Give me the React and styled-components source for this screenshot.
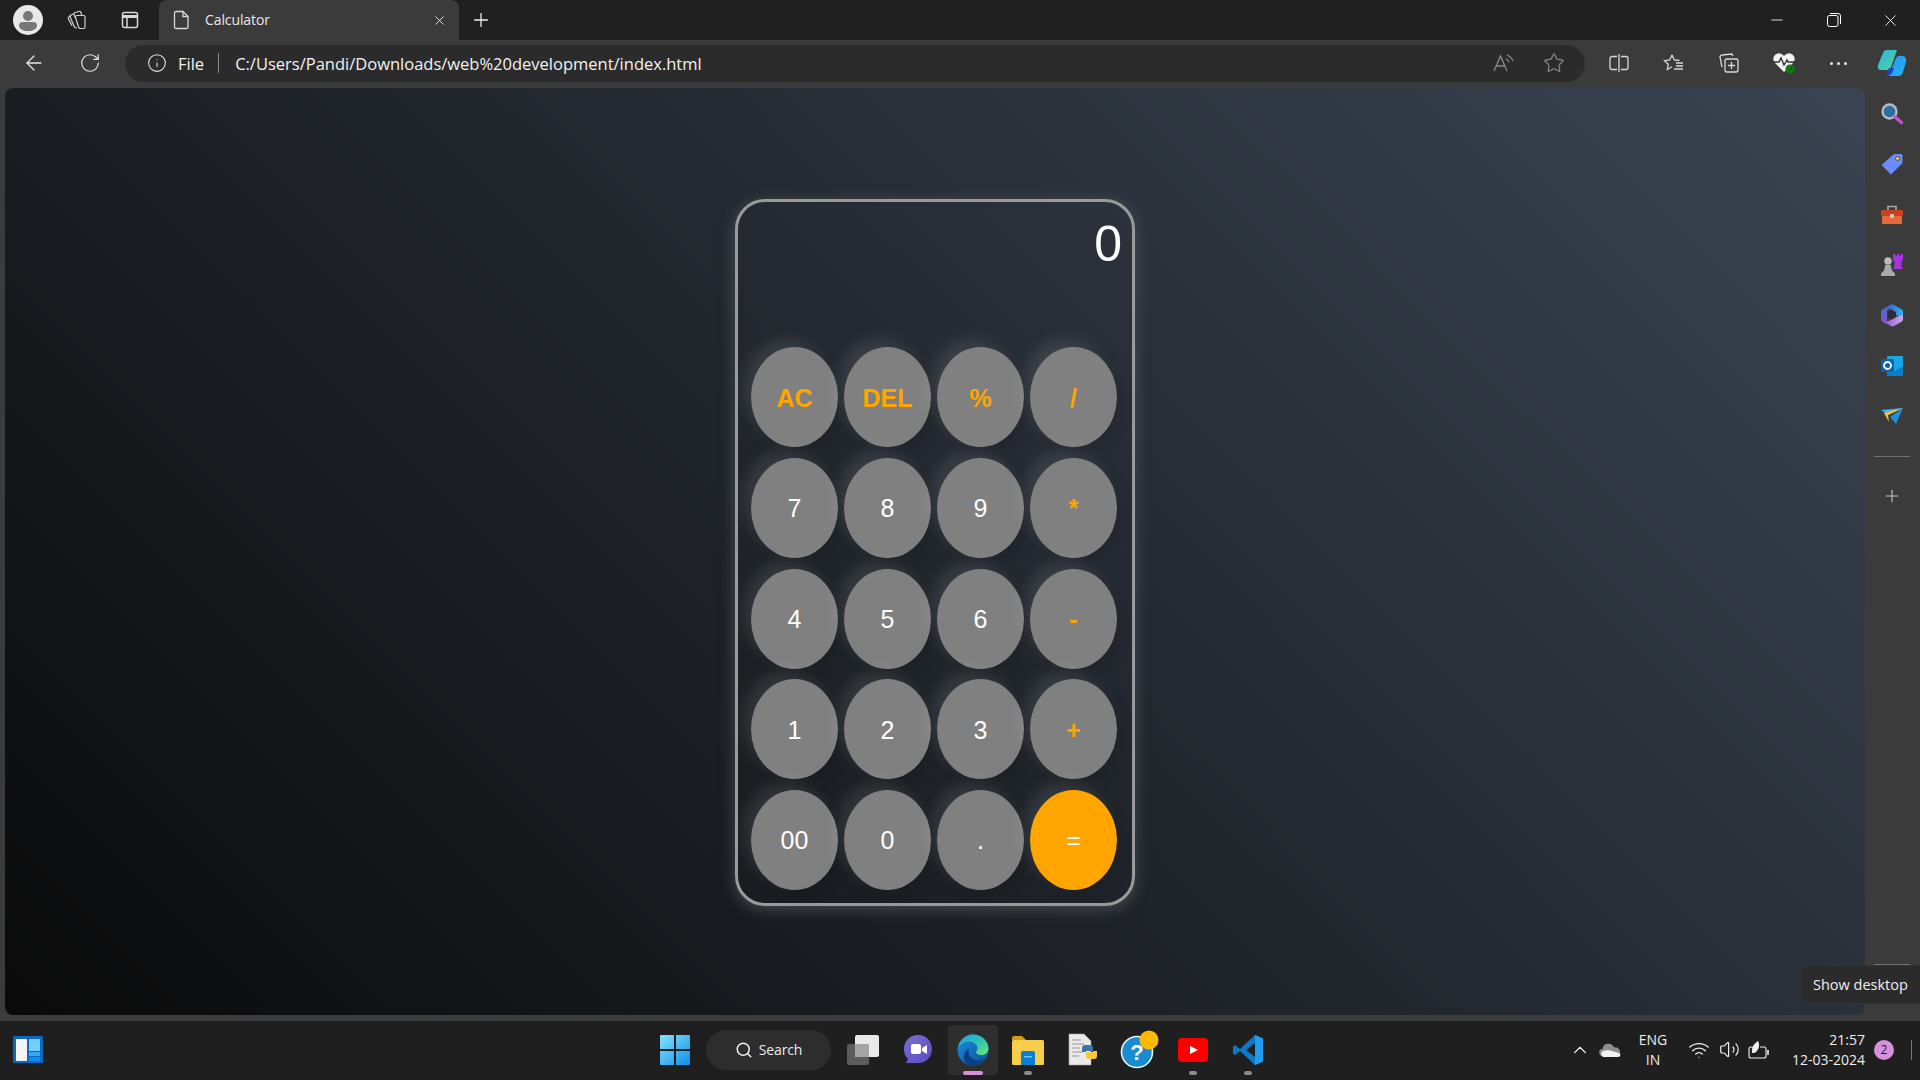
import React from 'react'
import styled, { createGlobalStyle } from 'styled-components'
import { ArrowLeft, RotateCw, Info, Star, Plus, X, Minus, Search, ChevronUp, Wifi, Volume2 } from 'lucide-react'

const keys = [
  { label: 'AC', op: true }, { label: 'DEL', op: true }, { label: '%', op: true }, { label: '/', op: true },
  { label: '7' }, { label: '8' }, { label: '9' }, { label: '*', op: true },
  { label: '4' }, { label: '5' }, { label: '6' }, { label: '-', op: true },
  { label: '1' }, { label: '2' }, { label: '3' }, { label: '+', op: true },
  { label: '00' }, { label: '0' }, { label: '.' }, { label: '=', equal: true },
]

const Avatar = () => (
  <svg width="30" height="30" viewBox="0 0 30 30">
    <circle cx="15" cy="15" r="15" fill="#e8e8e8" />
    <circle cx="15" cy="11" r="5" fill="#777" />
    <path d="M6 20c0-2 2-3 4-3h10c2 0 4 1 4 3 0 4-4 6-9 6s-9-2-9-6z" fill="#777" />
  </svg>
)
const CollectionsTabs = () => (
  <svg width="22" height="22" viewBox="0 0 22 22" fill="none" stroke="#cfcfcf" strokeWidth="1.2">
    <path d="M11 6.500h6.500a1.500 1.500 0 0 1 1.500 1.500v10a1.500 1.500 0 0 1-1.500 1.500h-3a2 2 0 0 1-2-1.500L9.500 8.500a1.500 1.500 0 0 1 1.500-2z" />
    <path d="M9.500 9L8 5.500a1.500 1.500 0 0 1 1-2L13 2.500a1.500 1.500 0 0 1 2 1l.8 3" />
    <path d="M8.500 4.500L5 6a1.500 1.500 0 0 0-.8 2l4 9.500a2 2 0 0 0 2.500 1.200" />
    <path d="M5 6.300L2.800 8a1.500 1.500 0 0 0-.4 1.800l3.600 7" />
  </svg>
)
const VerticalTabs = () => (
  <svg width="20" height="20" viewBox="0 0 20 20" fill="none" stroke="#d8d8d8" strokeWidth="1.5">
    <rect x="2.500" y="2.500" width="15" height="15" rx="2" />
    <path d="M2.500 6.500h15" strokeWidth="3" />
    <path d="M7 7v10.500" />
  </svg>
)
const PageIcon = () => (
  <svg width="18" height="20" viewBox="0 0 18 20" fill="none" stroke="#d8d8d8" strokeWidth="1.3">
    <path d="M3 1.500h7l5 5V17a1.500 1.500 0 0 1-1.500 1.500h-10.500A1.500 1.500 0 0 1 1.500 17V3A1.500 1.500 0 0 1 3 1.500z" />
    <path d="M10 1.500V6.500h5" />
  </svg>
)
const RestoreIcon = () => (
  <svg width="14" height="14" viewBox="0 0 14 14" fill="none" stroke="#fff" strokeWidth="1">
    <rect x="0.500" y="2.500" width="10.500" height="11" rx="2" />
    <path d="M3 .500h8a2.500 2.500 0 0 1 2.500 2.500v8" />
  </svg>
)
const ReadAloud = () => (
  <svg width="22" height="20" viewBox="0 0 22 20" fill="none" stroke="#8a8a8a" strokeWidth="1.3">
    <path d="M1 18L7.500 3 14 18M3.500 13h8" />
    <path d="M13 6a6 6 0 0 1 3 3M14 2a10 10 0 0 1 6 6" />
  </svg>
)
const SplitIcon = () => (
  <svg width="20" height="20" viewBox="0 0 20 20" fill="none" stroke="#d8d8d8" strokeWidth="1.3">
    <path d="M8 3.500H3a2 2 0 0 0-2 2v9a2 2 0 0 0 2 2h5M12 3.500h5a2 2 0 0 1 2 2v9a2 2 0 0 1-2 2h-5M10 1v18" />
  </svg>
)
const FavList = () => (
  <svg width="22" height="20" viewBox="0 0 22 20" fill="none" stroke="#d8d8d8" strokeWidth="1.3">
    <path d="M9 2l2.300 5 5.200.5M9 2L6.700 7 1.500 7.700l3.800 3.500-1 5.300 4.700-2.700" />
    <path d="M13 10h7M13 13h7M11 16h9" />
  </svg>
)
const CollectionAdd = () => (
  <svg width="22" height="22" viewBox="0 0 22 22" fill="none" stroke="#d8d8d8" strokeWidth="1.3">
    <path d="M15 4l-1-2-10 1a2 2 0 0 0-2 2l2 10" />
    <rect x="7" y="7" width="13" height="13" rx="2" />
    <path d="M13.500 10v7M10 13.500h7" />
  </svg>
)
const HealthHeart = () => (
  <svg width="24" height="24" viewBox="0 0 24 24">
    <path d="M12 21L3 12a5.500 5.500 0 0 1 0-8 5.500 5.500 0 0 1 8 0l1 1 1-1a5.500 5.500 0 0 1 8 0 5.500 5.500 0 0 1 0 8z" fill="#f2f2f2" />
    <path d="M1 11h6l2-4 3 7 3-5 1 2h7" fill="none" stroke="#333" strokeWidth="1.400" />
    <circle cx="18" cy="18" r="4.500" fill="#107c10" />
    <path d="M16 18l1.500 1.500 2.500-3" fill="none" stroke="#1d1d1d" strokeWidth="1" />
  </svg>
)
const Copilot = () => (
  <svg width="30" height="28" viewBox="0 0 30 28">
    <defs>
      <linearGradient id="cpa" x1="0" y1="0" x2="1" y2="1"><stop offset="0" stopColor="#1fb5e8" /><stop offset="1" stopColor="#5fd38f" /></linearGradient>
      <linearGradient id="cpb" x1="0" y1="0" x2="1" y2="1"><stop offset="0" stopColor="#2f8ff0" /><stop offset="1" stopColor="#20b8ef" /></linearGradient>
    </defs>
    <path d="M9 1h11l-6 17c-1 2-2 3-4 3H4c-2 0-4-2-3-5L6 4c.5-2 2-3 3-3z" fill="url(#cpa)" />
    <path d="M21 7h5c2 0 4 3 3 6l-3 10c-1 3-3 4-5 4H9l4-4 6-14z" fill="url(#cpb)" />
    <path d="M12 19h5l-2 5-3 3H9z" fill="#1d44c8" />
  </svg>
)
const Magnifier = () => (
  <svg width="24" height="24" viewBox="0 0 24 24">
    <circle cx="9.500" cy="9.500" r="7" fill="#2c6fa3" stroke="#b9b9b9" strokeWidth="2.400" />
    <path d="M15 15l6.500 5.500" stroke="#c94fd6" strokeWidth="3.400" strokeLinecap="round" />
  </svg>
)
const PriceTag = () => (
  <svg width="24" height="24" viewBox="0 0 24 24">
    <path d="M14 2h7a1.500 1.500 0 0 1 1.500 1.500V11L11 22.500 1.500 13z" fill="#6b8cff" />
    <circle cx="17.500" cy="6.500" r="2" fill="#f4d21f" stroke="#333" strokeWidth=".7" />
  </svg>
)
const Toolbox = () => (
  <svg width="24" height="22" viewBox="0 0 24 22">
    <path d="M8 6V2.500h8V6" fill="none" stroke="#a8a8a8" strokeWidth="1.600" />
    <rect x="1" y="6" width="22" height="6" rx="1" fill="#c8421d" />
    <rect x="2" y="12" width="20" height="8" rx="1" fill="#e7683a" />
    <rect x="10" y="10" width="4" height="4" rx="1" fill="#c9c9c9" />
  </svg>
)
const ChessPieces = () => (
  <svg width="24" height="24" viewBox="0 0 24 24">
    <path d="M13 1h2.500v2H17V1h2v2h1.500V1H23v6l-1.500 1.500V14l1.500 2H13l1.500-2V8.500L13 7z" fill="#a733e0" />
    <circle cx="8" cy="8" r="3.700" fill="#bcbcbc" />
    <path d="M5 12h6v1.500l1 4 3 3V23H1v-2.500l3-3 1-4z" fill="#a8a8a8" />
  </svg>
)
const M365 = () => (
  <svg width="22" height="24" viewBox="0 0 22 24">
    <defs>
      <linearGradient id="msa" x1="0" y1="0" x2="0" y2="1"><stop offset="0" stopColor="#3a6fd8" /><stop offset="1" stopColor="#8a52cf" /></linearGradient>
      <linearGradient id="msb" x1="0" y1="0" x2="1" y2="0"><stop offset="0" stopColor="#2f68d6" /><stop offset="1" stopColor="#37b6e9" /></linearGradient>
      <linearGradient id="msc" x1="0" y1="0" x2="1" y2="0"><stop offset="0" stopColor="#8f5bd6" /><stop offset="1" stopColor="#d3a6ee" /></linearGradient>
    </defs>
    <path d="M9 2L2 6a3 3 0 0 0-2 3v7a3 3 0 0 0 2 3l4 2V9a3 3 0 0 1 2-3l5-3z" fill="url(#msa)" />
    <path d="M9 2a3 3 0 0 1 3-.5l8 4.500a3 3 0 0 1 2 3v7l-7-4V9L9 6z" fill="url(#msb)" />
    <path d="M22 12v4a3 3 0 0 1-2 3l-7 4a3 3 0 0 1-3 0l-6-3.500 8-3.500 3-2z" fill="url(#msc)" />
    <path d="M7 9.500l4-2.300 4 2.300v4.500l-4 2.300-4-2z" fill="#2d2d33" />
  </svg>
)
const Outlook = () => (
  <svg width="22" height="22" viewBox="0 0 22 22">
    <rect x="6" y="1" width="16" height="20" rx="1" fill="#1aa5e3" />
    <path d="M6 12l8 4 8-5v10H6z" fill="#0d7fc4" />
    <rect x="0" y="4" width="13" height="13" rx="1.500" fill="#0a63b8" />
    <circle cx="6.500" cy="10.500" r="3.500" fill="none" stroke="#fff" strokeWidth="1.800" />
  </svg>
)
const PaperPlane = () => (
  <svg width="24" height="18" viewBox="0 0 24 18">
    <path d="M1 3l22-2L8 8z" fill="#3fb2ef" />
    <path d="M23 1l-7 16-6-7z" fill="#1c8fe0" />
    <path d="M23 1L8 8l1 7-5-9z" fill="#f4c23a" />
  </svg>
)
const WidgetsIcon = () => (
  <svg width="30" height="27" viewBox="0 0 30 27">
    <rect width="30" height="27" rx="1.500" fill="#0f67c0" />
    <rect x="3" y="3" width="11" height="22" rx="1" fill="#f4f4f4" />
    <rect x="16" y="3" width="11" height="12" fill="#6fd0ff" />
    <rect x="16" y="16" width="11" height="4" fill="#35a9f7" />
    <rect x="16" y="21" width="11" height="4" fill="#0a90f0" />
  </svg>
)
const WindowsLogo = () => (
  <svg width="30" height="30" viewBox="0 0 30 30">
    <defs>
      <linearGradient id="wina" x1="0" y1="0" x2="1" y2="1"><stop offset="0" stopColor="#86e3ff" /><stop offset="1" stopColor="#0f8fe8" /></linearGradient>
    </defs>
    <path d="M0 1a1 1 0 0 1 1-1h13v14H0zM16 0h13a1 1 0 0 1 1 1v13H16zM0 16h14v14H1a1 1 0 0 1-1-1zM16 16h14v13a1 1 0 0 1-1 1H16z" fill="url(#wina)" />
  </svg>
)
const TaskView = () => (
  <svg width="32" height="30" viewBox="0 0 32 30">
    <rect x="0" y="9" width="22" height="21" rx="2" fill="#5c5c5c" />
    <rect x="8" y="0" width="24" height="22" rx="2" fill="#e9e9e9" />
    <rect x="8" y="9" width="14" height="13" fill="#a5a5a5" />
  </svg>
)
const MeetChat = () => (
  <svg width="30" height="32" viewBox="0 0 30 32">
    <defs>
      <linearGradient id="mca" x1="0" y1="0" x2="1" y2="1"><stop offset="0" stopColor="#7b6fd0" /><stop offset="1" stopColor="#5a4cc0" /></linearGradient>
    </defs>
    <path d="M15 1c8 0 14 6 14 14s-6 14-14 14H3l2-4c-3-3-4-6-4-10C1 7 7 1 15 1z" fill="url(#mca)" />
    <rect x="8" y="10" width="10" height="10" rx="2" fill="#fff" />
    <path d="M19 14l5-3v9l-5-3z" fill="#fff" />
  </svg>
)
const EdgeIcon = () => (
  <svg width="32" height="34" viewBox="0 0 32 34">
    <defs>
      <linearGradient id="eda" x1="0" y1="0" x2="1" y2="1"><stop offset="0" stopColor="#1f9fe0" /><stop offset=".55" stopColor="#30c5b0" /><stop offset="1" stopColor="#6ee86a" /></linearGradient>
      <linearGradient id="edb" x1="0" y1="0" x2="1" y2="1"><stop offset="0" stopColor="#1a8fdc" /><stop offset="1" stopColor="#0d4f9a" /></linearGradient>
    </defs>
    <circle cx="16" cy="17" r="15.500" fill="url(#edb)" />
    <path d="M1 16C2 8 8 1.500 16 1.500c9 0 15.500 7 15.500 14 0 4-3 6.500-7 6.500-3 0-5.500-1-5.500-3 0-.7 1.500-1.500 1.500-3.500 0-4-4-7-8.500-7C7 8.500 2 12 1 16z" fill="url(#eda)" />
    <path d="M12 15c-2 5 1 11 7 12 4 .7 7-.5 9-1.500-3 4.500-7 7-12 7-3 0-5-1-7-2.500-3-3-3.500-10 3-15z" fill="#0b3f86" />
  </svg>
)
const FolderIcon = () => (
  <svg width="32" height="30" viewBox="0 0 32 30">
    <path d="M0 3a2 2 0 0 1 2-2h8l4 4H0z" fill="#d99a0e" />
    <rect x="0" y="5" width="32" height="25" rx="1.500" fill="#f8ce4a" />
    <path d="M9 18a2 2 0 0 1 2-2h10a2 2 0 0 1 2 2v12H9z" fill="#0a7fd4" />
    <rect x="12" y="21" width="8" height="1.500" fill="#6ec3f5" />
  </svg>
)
const PythonFile = () => (
  <svg width="30" height="34" viewBox="0 0 30 34">
    <path d="M1 1h15l7 7v24H1z" fill="#e9e9e9" stroke="#aaa" strokeWidth=".6" />
    <path d="M4 7h9M4 11h12M4 15h8M4 19h10M4 23h7" stroke="#999" strokeWidth="1.200" />
    <path d="M17 12h5a3 3 0 0 1 3 3v3h-7v1h-4v-4a3 3 0 0 1 3-3z" fill="#3a74a8" />
    <path d="M29 18v5a3 3 0 0 1-3 3h-5a3 3 0 0 1-3-3v-4h7v-1z" fill="#f7c93e" />
  </svg>
)
const HelpIcon = () => (
  <svg width="42" height="40" viewBox="-4 0 42 40">
    <circle cx="16" cy="22" r="15.500" fill="#1b8bd0" stroke="#e8f4fb" strokeWidth="1.600" />
    <circle cx="16" cy="22" r="12" fill="#1b8bd0" />
    <text x="16" y="30" textAnchor="middle" fontSize="22" fontWeight="700" fontFamily="Liberation Sans, sans-serif" fill="#fff">?</text>
    <circle cx="28" cy="10" r="9.500" fill="#ffb900" />
  </svg>
)
const YouTube = () => (
  <svg width="30" height="24" viewBox="0 0 30 24">
    <rect width="30" height="24" rx="4" fill="#f00" />
    <path d="M12 8l8 4-8 4z" fill="#fff" />
  </svg>
)
const VsCode = () => (
  <svg width="30" height="30" viewBox="0 0 30 30">
    <path d="M22 0l8 3.500v23L22 30 7 16 2 20 0 18.500v-7L2 10l5 4z" fill="#0a7ac7" />
    <path d="M22 0l8 3.500v23L22 30zM22 8l-9 7 9 7z" fill="#1f9cf0" fillRule="evenodd" />
    <path d="M22 8v14l-9-7z" fill="#1f1f1f" />
  </svg>
)
const OneDrive = () => (
  <svg width="22" height="14" viewBox="0 0 22 14">
    <path d="M4 13a3.500 3.500 0 0 1-.5-7A6 6 0 0 1 15 4.500a4.500 4.500 0 0 1 6 4.500 4 4 0 0 1-2 4z" fill="#8e8e8e" />
    <path d="M4 14a3.500 3.500 0 0 1 0-6l5-1 11 3c2 1 2 4-1 4z" fill="#f2f2f2" />
  </svg>
)
const BatteryLeaf = () => (
  <svg width="22" height="20" viewBox="0 0 22 20" fill="none" stroke="#f0f0f0" strokeWidth="1.100">
    <path d="M7 7H3a2 2 0 0 0-2 2v7a2 2 0 0 0 2 2h13a2 2 0 0 0 2-2V9a2 2 0 0 0-2-2h-4" />
    <path d="M20 10v5" strokeWidth="1.600" />
    <path d="M4 13C3 7 7 3 10 1c2 4 1 8-2 11-1 1-3 1-4 1z" fill="#f0f0f0" stroke="none" />
  </svg>
)

function App() {
  return (
    <>
      <GlobalStyle />
      <Screen>
        <TitleBar>
          <TitleButton $w={56}><Avatar /></TitleButton>
          <TitleButton $w={42}><CollectionsTabs /></TitleButton>
          <TitleButton $w={61} $pad={3}><VerticalTabs /></TitleButton>
          <Tab>
            <PageIcon />
            <TabTitle>Calculator</TabTitle>
            <X size={15} color="#e8e8e8" strokeWidth={1.5} />
          </Tab>
          <TitleButton $w={44}><Plus size={22} color="#eee" strokeWidth={1.4} /></TitleButton>
          <WindowControls>
            <WindowButton><Minus size={18} color="#fff" strokeWidth={1.1} /></WindowButton>
            <WindowButton><RestoreIcon /></WindowButton>
            <WindowButton><X size={19} color="#fff" strokeWidth={1.1} /></WindowButton>
          </WindowControls>
        </TitleBar>

        <Toolbar>
          <NavButton><ArrowLeft size={24} color="#e6e6e6" strokeWidth={1.3} /></NavButton>
          <NavButton><RotateCw size={22} color="#e6e6e6" strokeWidth={1.3} /></NavButton>
          <AddressBar>
            <Info size={20} color="#e6e6e6" strokeWidth={1.3} />
            <SiteLabel>File</SiteLabel>
            <AddressDivider />
            <UrlText>C:/Users/Pandi/Downloads/web%20development/index.html</UrlText>
            <AddressActions>
              <ReadAloud />
              <Star size={22} color="#8a8a8a" strokeWidth={1.3} />
            </AddressActions>
          </AddressBar>
          <ToolActions>
            <ToolButton><SplitIcon /></ToolButton>
            <ToolButton><FavList /></ToolButton>
            <ToolButton><CollectionAdd /></ToolButton>
            <ToolButton><HealthHeart /></ToolButton>
            <ToolButton><Dots><i /><i /><i /></Dots></ToolButton>
            <ToolButton $w={52}><Copilot /></ToolButton>
          </ToolActions>
        </Toolbar>

        <Main>
          <Page>
            <Calculator>
              <Display>0</Display>
              <Keypad>
                {keys.map((k) => (
                  <Key key={k.label} $op={k.op} $equal={k.equal}>{k.label}</Key>
                ))}
              </Keypad>
            </Calculator>
          </Page>
          <SideBar>
            <SideButton><Magnifier /></SideButton>
            <SideButton><PriceTag /></SideButton>
            <SideButton><Toolbox /></SideButton>
            <SideButton><ChessPieces /></SideButton>
            <SideButton><M365 /></SideButton>
            <SideButton><Outlook /></SideButton>
            <SideButton><PaperPlane /></SideButton>
            <SideRule />
            <SideButton><Plus size={20} color="#c8c8c8" strokeWidth={1.3} /></SideButton>
            <SideRuleBottom />
          </SideBar>
        </Main>

        <Taskbar>
          <WidgetSlot><WidgetsIcon /></WidgetSlot>
          <TaskCenter>
            <StartButton><WindowsLogo /></StartButton>
            <SearchPill>
              <Search size={18} color="#f0f0f0" strokeWidth={2} />
              <span>Search</span>
            </SearchPill>
            <TaskItem><TaskView /></TaskItem>
            <TaskItem><MeetChat /></TaskItem>
            <TaskItem $active $mark="active"><EdgeIcon /></TaskItem>
            <TaskItem $mark="open"><FolderIcon /></TaskItem>
            <TaskItem><PythonFile /></TaskItem>
            <TaskItem><HelpIcon /></TaskItem>
            <TaskItem $mark="open"><YouTube /></TaskItem>
            <TaskItem $mark="open"><VsCode /></TaskItem>
          </TaskCenter>
          <Tray>
            <TrayIcon $w={30}><ChevronUp size={22} color="#eee" strokeWidth={1.2} /></TrayIcon>
            <TrayIcon $w={30}><OneDrive /></TrayIcon>
            <LangBlock>ENG<br />IN</LangBlock>
            <TrayIcon $w={30}><Wifi size={22} color="#f0f0f0" strokeWidth={1.5} /></TrayIcon>
            <TrayIcon $w={30}><Volume2 size={21} color="#f0f0f0" strokeWidth={1.4} /></TrayIcon>
            <TrayIcon $w={30}><BatteryLeaf /></TrayIcon>
            <Clock>21:57<br />12-03-2024</Clock>
            <NoticeBadge>2</NoticeBadge>
            <DesktopEdge />
          </Tray>
        </Taskbar>

        <Tooltip>Show desktop</Tooltip>
      </Screen>
    </>
  )
}

const GlobalStyle = createGlobalStyle`
  html, body {
    margin: 0;
    padding: 0;
    background: #1f1f1f;
  }
  * {
    box-sizing: border-box;
  }
`;

const Screen = styled.div`
  width: 1920px;
  height: 1080px;
  position: relative;
  overflow: hidden;
  display: flex;
  flex-direction: column;
  font-family: "Open Sans", "Noto Sans", sans-serif;
  color: #fff;
`;

const TitleBar = styled.div`
  height: 40px;
  background: #202020;
  display: flex;
  align-items: stretch;
`;

const TitleButton = styled.div`
  width: ${(p) => p.$w}px;
  padding-left: ${(p) => p.$pad || 0}px;
  display: flex;
  align-items: center;
  justify-content: center;
`;

const Tab = styled.div`
  width: 300px;
  background: #3b3b3b;
  border-radius: 8px 8px 0 0;
  display: flex;
  align-items: center;
  padding: 0 12px 0 14px;
`;

const TabTitle = styled.span`
  flex: 1;
  margin-left: 14px;
  font-size: 14px;
  letter-spacing: -0.1px;
  line-height: 18px;
  color: #e8e8e8;
`;

const WindowControls = styled.div`
  margin-left: auto;
  padding-right: 1px;
  display: flex;
`;

const WindowButton = styled.div`
  width: 57px;
  display: flex;
  align-items: center;
  justify-content: center;
`;

const Toolbar = styled.div`
  height: 48px;
  background: #3b3b3b;
  display: flex;
  align-items: center;
  padding: 0 0 2px 3px;
`;

const NavButton = styled.div`
  width: 56px;
  height: 36px;
  padding-left: 6px;
  display: flex;
  align-items: center;
  justify-content: center;
`;

const AddressBar = styled.div`
  width: 1460px;
  height: 37px;
  margin-left: 10px;
  background: #2b2b2b;
  border-radius: 19px;
  display: flex;
  align-items: center;
  padding: 0 20px 0 22px;
`;

const SiteLabel = styled.span`
  margin-left: 11px;
  font-size: 16.500px;
  color: #f0f0f0;
`;

const AddressDivider = styled.div`
  width: 1px;
  height: 20px;
  background: #8a8a8a;
  margin: 0 16px 0 14px;
`;

const UrlText = styled.span`
  flex: 1;
  font-size: 16.500px;
  color: #f2f2f2;
`;

const AddressActions = styled.div`
  display: flex;
  align-items: center;
  gap: 28px;
`;

const ToolActions = styled.div`
  display: flex;
  margin-left: 6px;
`;

const ToolButton = styled.div`
  width: ${(p) => p.$w || 55}px;
  height: 36px;
  display: flex;
  align-items: center;
  justify-content: center;
`;

const Dots = styled.div`
  display: flex;
  gap: 4px;
  i {
    width: 3px;
    height: 3px;
    border-radius: 50%;
    background: #e6e6e6;
  }
`;

const Main = styled.div`
  flex: 1;
  background: #3b3b3b;
  display: flex;
  padding-left: 5px;
`;

const Page = styled.div`
  flex: 1;
  margin-bottom: 6px;
  padding-top: 2px;
  border-radius: 8px;
  background: linear-gradient(45deg, #0a0a0a, #3a4452);
  display: flex;
  align-items: center;
  justify-content: center;
`;

const Calculator = styled.div`
  width: 400px;
  padding: 13px 10px 13px 13px;
  border: 3px solid #9a9a9a;
  border-radius: 30px;
  box-shadow: 0px 3px 15px rgba(113, 115, 119, 0.5);
`;

const Display = styled.div`
  height: 132px;
  padding-top: 1px;
  text-align: right;
  font-family: "Liberation Sans", Arial, sans-serif;
  font-size: 50px;
  line-height: 56px;
  color: #fff;
`;

const Keypad = styled.div`
  width: 366px;
  display: grid;
  grid-template-columns: repeat(4, 87px);
  grid-auto-rows: 100px;
  column-gap: 6px;
  row-gap: 10.7px;
`;

const Key = styled.button`
  border: none;
  padding: 2px 0 0;
  border-radius: 50%;
  background: ${(p) => (p.$equal ? '#ffa500' : '#808080')};
  color: ${(p) => (p.$op ? '#ffa500' : '#fff')};
  font-family: "Liberation Sans", Arial, sans-serif;
  font-size: 25px;
  font-weight: ${(p) => (p.$op ? 700 : 400)};
  box-shadow: -8px -8px 15px rgba(255, 255, 255, 0.1), 5px 5px 15px rgba(0, 0, 0, 0.1);
  cursor: pointer;
`;

const SideBar = styled.div`
  width: 55px;
  display: flex;
  flex-direction: column;
  align-items: center;
  padding: 1px 2px 0 0;
`;

const SideButton = styled.div`
  height: 50.300px;
  width: 100%;
  display: flex;
  align-items: center;
  justify-content: center;
`;

const SideRule = styled.div`
  width: 36px;
  height: 1px;
  background: #6e6e6e;
  margin: 15px 0 14px;
`;

const SideRuleBottom = styled.div`
  width: 36px;
  height: 1px;
  background: #6e6e6e;
  margin-top: auto;
  margin-bottom: 56px;
`;

const Taskbar = styled.div`
  height: 59px;
  padding-bottom: 2px;
  background: #1f1f1f;
  display: flex;
  align-items: center;
`;

const WidgetSlot = styled.div`
  width: 650px;
  padding-left: 13px;
  display: flex;
  align-items: center;
`;

const TaskCenter = styled.div`
  display: flex;
  align-items: center;
`;

const StartButton = styled.div`
  width: 50px;
  display: flex;
  justify-content: center;
`;

const SearchPill = styled.div`
  width: 125px;
  height: 40px;
  margin: 0 4px 0 6px;
  border-radius: 20px;
  background: #2d2d2d;
  display: flex;
  align-items: center;
  justify-content: center;
  gap: 6px;
  font-size: 14px;
  letter-spacing: -0.1px;
  color: #eaeaea;
`;

const TaskItem = styled.div`
  width: ${(p) => (p.$active ? '50px' : '52px')};
  margin: 0 ${(p) => (p.$active ? '2.500px' : '1.500px')};
  height: 50px;
  position: relative;
  border-radius: 4px;
  display: flex;
  align-items: center;
  justify-content: center;
  background: ${(p) => (p.$active ? '#2e2e2e' : 'transparent')};
  &::after {
    content: ${(p) => (p.$mark ? "''" : 'none')};
    position: absolute;
    bottom: 0;
    left: 50%;
    transform: translateX(-50%);
    width: ${(p) => (p.$mark === 'active' ? '20px' : '8px')};
    height: 4px;
    border-radius: 2px;
    background: ${(p) => (p.$mark === 'active' ? '#d990dc' : '#8c8c8c')};
  }
`;

const Tray = styled.div`
  margin-left: auto;
  display: flex;
  align-items: center;
`;

const TrayIcon = styled.div`
  width: ${(p) => p.$w}px;
  display: flex;
  align-items: center;
  justify-content: center;
`;

const LangBlock = styled.div`
  width: 56px;
  margin-right: 3px;
  text-align: center;
  font-size: 14px;
  line-height: 20px;
  color: #eee;
`;

const Clock = styled.div`
  width: 91px;
  text-align: right;
  font-size: 14px;
  line-height: 20px;
  color: #eee;
`;

const NoticeBadge = styled.div`
  width: 20px;
  height: 20px;
  margin-left: 9px;
  border-radius: 50%;
  background: #d990dc;
  color: #1f1f1f;
  font-size: 12px;
  display: flex;
  align-items: center;
  justify-content: center;
`;

const DesktopEdge = styled.div`
  width: 1px;
  height: 20px;
  margin: 0 8px 0 17px;
  background: #777;
`;

const Tooltip = styled.div`
  position: absolute;
  right: 0;
  top: 965px;
  width: 120px;
  height: 39px;
  padding-left: 12px;
  background: #2b2b2b;
  border: 1px solid #333;
  border-right: none;
  border-radius: 6px 0 0 6px;
  display: flex;
  align-items: center;
  font-size: 14.500px;
  color: #eee;
`;

export default App
